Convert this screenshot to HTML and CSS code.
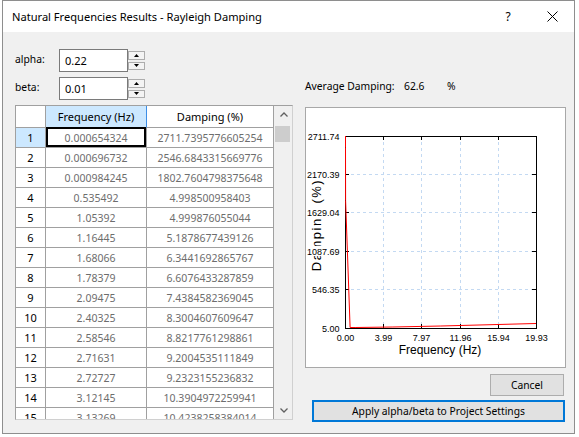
FILE: index.html
```html
<!DOCTYPE html>
<html>
<head>
<meta charset="utf-8">
<title>Natural Frequencies Results - Rayleigh Damping</title>
<link rel="stylesheet" href="styles.css">
</head>
<body>
<div class="window">
  <div class="titlebar">
    <span class="title">Natural Frequencies Results - Rayleigh Damping</span>
    <span class="tb-btn help">?</span>
    <span class="tb-btn close"><svg width="11" height="11" viewBox="0 0 11 11"><path d="M0.5 0.5 L10.5 10.5 M10.5 0.5 L0.5 10.5" stroke="#000" stroke-width="1" fill="none"/></svg></span>
  </div>
  <div class="content">
    <div class="left">
      <div class="param">
        <span class="param-label">alpha:</span>
        <div class="spin-input">0.22</div>
        <div class="spin-btns">
          <div class="spin-btn"><svg width="5" height="3" viewBox="0 0 5 3"><polygon points="2.5,0 5,3 0,3" fill="#000"/></svg></div>
          <div class="spin-btn"><svg width="5" height="3" viewBox="0 0 5 3"><polygon points="0,0 5,0 2.5,3" fill="#000"/></svg></div>
        </div>
      </div>
      <div class="param">
        <span class="param-label">beta:</span>
        <div class="spin-input">0.01</div>
        <div class="spin-btns">
          <div class="spin-btn"><svg width="5" height="3" viewBox="0 0 5 3"><polygon points="2.5,0 5,3 0,3" fill="#000"/></svg></div>
          <div class="spin-btn"><svg width="5" height="3" viewBox="0 0 5 3"><polygon points="0,0 5,0 2.5,3" fill="#000"/></svg></div>
        </div>
      </div>
      <div class="grid-frame">
        <div class="grid">
          <div class="row head"><div class="c rh corner"></div><div class="c ch hl">Frequency (Hz)</div><div class="c ch">Damping (%)</div></div>
          <div class="row"><div class="c rh hl">1</div><div class="c v cur">0.000654324</div><div class="c v">2711.7395776605254</div></div>
          <div class="row"><div class="c rh">2</div><div class="c v">0.000696732</div><div class="c v">2546.6843315669776</div></div>
          <div class="row"><div class="c rh">3</div><div class="c v">0.000984245</div><div class="c v">1802.7604798375648</div></div>
          <div class="row"><div class="c rh">4</div><div class="c v">0.535492</div><div class="c v">4.998500958403</div></div>
          <div class="row"><div class="c rh">5</div><div class="c v">1.05392</div><div class="c v">4.999876055044</div></div>
          <div class="row"><div class="c rh">6</div><div class="c v">1.16445</div><div class="c v">5.1878677439126</div></div>
          <div class="row"><div class="c rh">7</div><div class="c v">1.68066</div><div class="c v">6.3441692865767</div></div>
          <div class="row"><div class="c rh">8</div><div class="c v">1.78379</div><div class="c v">6.6076433287859</div></div>
          <div class="row"><div class="c rh">9</div><div class="c v">2.09475</div><div class="c v">7.4384582369045</div></div>
          <div class="row"><div class="c rh">10</div><div class="c v">2.40325</div><div class="c v">8.3004607609647</div></div>
          <div class="row"><div class="c rh">11</div><div class="c v">2.58546</div><div class="c v">8.8217761298861</div></div>
          <div class="row"><div class="c rh">12</div><div class="c v">2.71631</div><div class="c v">9.2004535111849</div></div>
          <div class="row"><div class="c rh">13</div><div class="c v">2.72727</div><div class="c v">9.2323155236832</div></div>
          <div class="row"><div class="c rh">14</div><div class="c v">3.12145</div><div class="c v">10.3904972259941</div></div>
          <div class="row"><div class="c rh">15</div><div class="c v">3.13269</div><div class="c v">10.4238258384014</div></div>
        </div>
        <div class="vscroll">
          <div class="sb-arrow"><svg width="8" height="5" viewBox="0 0 8 5"><polyline points="0.5,4.5 4,1 7.5,4.5" fill="none" stroke="#606060" stroke-width="1.3"/></svg></div>
          <div class="sb-track"><div class="sb-thumb"></div></div>
          <div class="sb-arrow"><svg width="8" height="5" viewBox="0 0 8 5"><polyline points="0.5,0.5 4,4 7.5,0.5" fill="none" stroke="#606060" stroke-width="1.3"/></svg></div>
        </div>
      </div>
    </div>
    <div class="right">
      <div class="avg"><span class="avg-label">Average Damping:</span><span class="avg-value">62.6</span><span class="avg-unit">%</span></div>
      <div class="chart">
        <svg class="plot" width="259" height="259" viewBox="0 0 259 259">
          <text class="ytitle" transform="translate(15,117) rotate(-90)" text-anchor="middle">Damping (%)</text>
          <g class="grid-lines">
            <line x1="77.5" y1="28" x2="77.5" y2="220"/>
            <line x1="115.5" y1="28" x2="115.5" y2="220"/>
            <line x1="154.5" y1="28" x2="154.5" y2="220"/>
            <line x1="192.5" y1="28" x2="192.5" y2="220"/>
            <line x1="39" y1="66.5" x2="230" y2="66.5"/>
            <line x1="39" y1="104.5" x2="230" y2="104.5"/>
            <line x1="39" y1="143.5" x2="230" y2="143.5"/>
            <line x1="39" y1="181.5" x2="230" y2="181.5"/>
          </g>
          <rect class="axis" x="39.5" y="28.5" width="191" height="192"/>
          <g class="ticks">
            <path d="M39 66.5h4M39 104.5h4M39 143.5h4M39 181.5h4M230 66.5h-4M230 104.5h-4M230 143.5h-4M230 181.5h-4M77.5 220v-4M115.5 220v-4M154.5 220v-4M192.5 220v-4M77.5 28v4M115.5 28v4M154.5 28v4M192.5 28v4"/>
          </g>
          <polyline class="curve" points="39.5,28 39.5,39.7 39.6,92.5 44.1,219.5 49.1,219.5 86.9,219 134.8,218 230,215.5"/>
          <g class="ylabels">
            <rect x="0" y="23" width="34" height="10"/>
            <rect x="0" y="61" width="34" height="10"/>
            <rect x="0" y="99" width="34" height="10"/>
            <rect x="0" y="138" width="34" height="10"/>
            <rect x="0" y="176" width="34" height="10"/>
            <rect x="0" y="215" width="34" height="10"/>
          </g>
          <g class="ticklabels" text-anchor="end">
            <text x="33.5" y="31.5">2711.74</text>
            <text x="33.5" y="69.5">2170.39</text>
            <text x="33.5" y="107.5">1629.04</text>
            <text x="33.5" y="146.5">1087.69</text>
            <text x="33.5" y="184.5">546.35</text>
            <text x="33.5" y="223.5">5.00</text>
          </g>
          <g class="ticklabels" text-anchor="middle">
            <text x="39.5" y="233">0.00</text>
            <text x="77.5" y="233">3.99</text>
            <text x="115.5" y="233">7.97</text>
            <text x="154.5" y="233">11.96</text>
            <text x="192.5" y="233">15.94</text>
            <text x="230.5" y="233">19.93</text>
          </g>
          <text class="xtitle" x="134" y="246" text-anchor="middle">Frequency (Hz)</text>
        </svg>
      </div>
      <div class="btn cancel">Cancel</div>
      <div class="btn apply">Apply alpha/beta to Project Settings</div>
    </div>
  </div>
</div>
</body>
</html>
```

FILE: styles.css
```css
* { box-sizing: border-box; }
html, body { margin: 0; padding: 0; background: #ffffff; }
body {
  font-family: "Noto Sans", "Open Sans", sans-serif;
  font-size: 10.3px;
  color: #000;
}
.window {
  margin-left: 2px;
  width: 573px;
  height: 434px;
  border: 1px solid #8e8e8e;
  background: #f0f0f0;
  display: flex;
  flex-direction: column;
}
.titlebar {
  height: 31px;
  background: #fff;
  display: flex;
  align-items: center;
  padding-left: 9px;
  font-size: 11.1px;
  flex-shrink: 0;
}
.title { flex: 1; }
.tb-btn {
  width: 44px;
  display: flex;
  justify-content: center;
  align-items: center;
}
.help { font-size: 12px; }
.close svg { display: block; }

.content {
  flex: 1;
  display: flex;
  gap: 12px;
  padding: 17px 8px 0 12px;
}
.left {
  width: 278px;
  display: flex;
  flex-direction: column;
  gap: 5px;
}
.param {
  display: flex;
  height: 23px;
  align-items: stretch;
}
.param-label {
  width: 44px;
  display: flex;
  align-items: center;
  padding-bottom: 3px;
}
.spin-input {
  width: 69px;
  border: 1px solid #7a7a7a;
  background: #fff;
  display: flex;
  align-items: center;
  padding-left: 5px;
  font-size: 11px;
}
.spin-btns {
  width: 17px;
  display: flex;
  flex-direction: column;
  gap: 2px;
  padding: 2px 0 2px 0;
}
.spin-btn {
  flex: 1;
  border: 1px solid #adadad;
  background: #f4f4f4;
  display: flex;
  align-items: center;
  justify-content: center;
}
.spin-btn svg { display: block; }

.grid-frame {
  width: 278px;
  height: 315px;
  border: 1px solid #a0a0a0;
  border-right-color: #d0d0d0;
  border-bottom-color: #d0d0d0;
  background: #fff;
  display: flex;
}
.grid {
  width: 258px;
  overflow: hidden;
}
.row {
  display: grid;
  grid-template-columns: 30px 101px 127px;
  height: 20px;
}
.row.head { height: 22px; }
.c {
  border-right: 1px solid #a0a0a0;
  border-bottom: 1px solid #a0a0a0;
  display: flex;
  align-items: center;
  justify-content: center;
  white-space: nowrap;
  overflow: hidden;
  position: relative;
}
.ch { font-size: 11px; background: #fff; }
.corner { background: #fff; }
.rh { font-size: 11px; }
.hl { background: #cce8ff; }
.ch.hl { border-right-color: #3d8ee6; }
.v { font-size: 10.5px; color: #6d6d6d; }
.cur { overflow: visible; }
.cur::after {
  content: "";
  position: absolute;
  top: -1px; left: 0; right: 0; bottom: 0;
  border: 2px solid #000;
}
.vscroll {
  width: 18px;
  background: #f0f0f0;
  display: flex;
  flex-direction: column;
  padding-left: 1px;
}
.sb-arrow {
  height: 17px;
  display: flex;
  align-items: center;
  justify-content: center;
}
.sb-arrow svg { display: block; }
.sb-track { flex: 1; padding-top: 3px; }
.sb-thumb {
  width: 15px;
  height: 16px;
  background: #cdcdcd;
}

.right {
  width: 261px;
  display: flex;
  flex-direction: column;
}
.avg {
  margin-top: 29px;
  height: 16px;
  display: flex;
  align-items: center;
}
.avg-label { width: 99px; }
.avg-value { width: 43px; }
.chart {
  margin-top: 13px;
  width: 261px;
  height: 261px;
  border: 1px solid #a8a8a8;
  background: #fff;
}
.plot { display: block; }
.grid-lines line {
  stroke: #c3d9f2;
  stroke-width: 1;
  stroke-dasharray: 3 3;
  shape-rendering: crispEdges;
}
.axis { fill: none; stroke: #000; stroke-width: 1; shape-rendering: crispEdges; }
.ticks path { stroke: #000; stroke-width: 1; fill: none; shape-rendering: crispEdges; }
.curve { fill: none; stroke: #ff0000; stroke-width: 1; }
.ylabels rect { fill: #fff; }
.ticklabels text {
  font-family: "Liberation Sans", Arial, sans-serif;
  font-size: 9px;
  fill: #000;
}
.xtitle, .ytitle {
  font-family: "Liberation Sans", Arial, sans-serif;
  font-size: 12px;
  fill: #000;
}
.ytitle { font-size: 13px; letter-spacing: 1.5px; }
.btn {
  height: 22px;
  background: #e1e1e1;
  border: 1px solid #adadad;
  display: flex;
  align-items: center;
  justify-content: center;
}
.cancel {
  margin-top: 6px;
  width: 74px;
  align-self: flex-end;
  margin-right: 2px;
}
.apply {
  margin-top: 4px;
  margin-left: 7px;
  width: 253px;
  border: 2px solid #0078d7;
}
```
